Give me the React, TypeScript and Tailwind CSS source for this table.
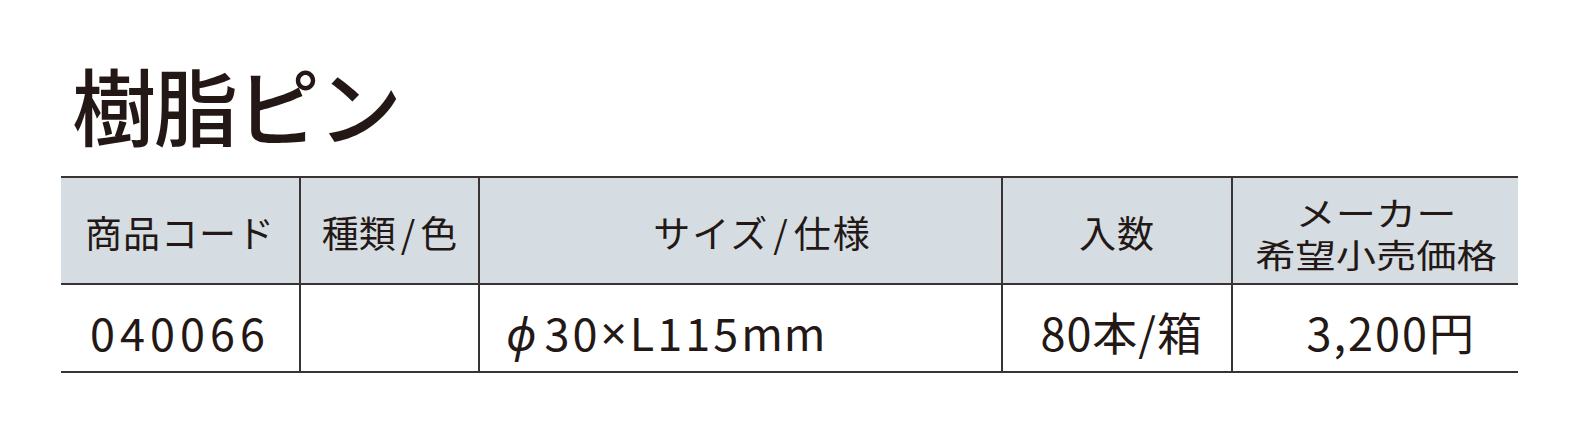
import * as React from "react";

// 樹脂ピン product spec table
const font = "font-['Noto_Sans_CJK_JP','Noto_Sans',sans-serif]";
const ink = "text-[#231815]";
const line = "border-[#3a3333]";

const cols = "grid grid-cols-[238px_179px_523px_230px_287px]";

export default function App() {
  return (
    <div className={`w-[1569px] h-[431px] bg-white ${font} ${ink}`}>
      <h1 className="pl-[72px] pt-[49px] text-[84px] leading-[110px] font-medium tracking-[-2px]">
        樹脂ピン
      </h1>

      <div className={`ml-[61px] mt-[17px] w-[1457px] border-t-2 ${line}`}>
        {/* header row */}
        <div className={`${cols} h-[107px] bg-[#d5dde2] border-b-2 ${line}`}>
          <div className="flex items-center justify-center pt-[5px] text-[37px] tracking-[1px]">
            商品コード
          </div>
          <div className={`flex items-center justify-center pt-[5px] text-[37px] border-l-2 ${line}`}>
            <span>種類</span>
            <span className="px-[5px]">/</span>
            <span>色</span>
          </div>
          <div className={`flex items-center justify-center pt-[5px] pl-[44px] text-[37px] tracking-[2px] border-l-2 ${line}`}>
            サイズ<span className="px-[4px]">/</span>仕様
          </div>
          <div className={`flex items-center justify-center pt-[5px] text-[37px] tracking-[1px] border-l-2 ${line}`}>
            入数
          </div>
          <div className={`flex items-center justify-center pt-[4px] border-l-2 ${line}`}>
            <p className="text-center text-[33px] leading-[42px] scale-x-[1.22]">
              メーカー
              <br />
              希望小売価格
            </p>
          </div>
        </div>

        {/* data row */}
        <div className={`${cols} h-[88px] border-b-2 ${line} text-[45px]`}>
          <div className="flex items-center pl-[29px] pt-[8px] tracking-[5px]">040066</div>
          <div className={`border-l-2 ${line}`} />
          <div className={`flex items-center pl-[26px] pt-[8px] border-l-2 ${line}`}>
            <span className="italic pr-[8px]">ϕ</span>
            <span className="tracking-[3px]">30</span>
            <span className="font-['Noto_Sans',sans-serif] text-[46px] pr-[3px]">×</span>
            <span className="tracking-[3px]">L115</span>
            <span className="tracking-[1px]">mm</span>
          </div>
          <div className={`flex items-center justify-end pr-[28px] pt-[8px] tracking-[1px] border-l-2 ${line}`}>
            80本/箱
          </div>
          <div className={`flex items-center justify-end pr-[42px] pt-[8px] tracking-[2px] border-l-2 ${line}`}>
            3,200円
          </div>
        </div>
      </div>
    </div>
  );
}
